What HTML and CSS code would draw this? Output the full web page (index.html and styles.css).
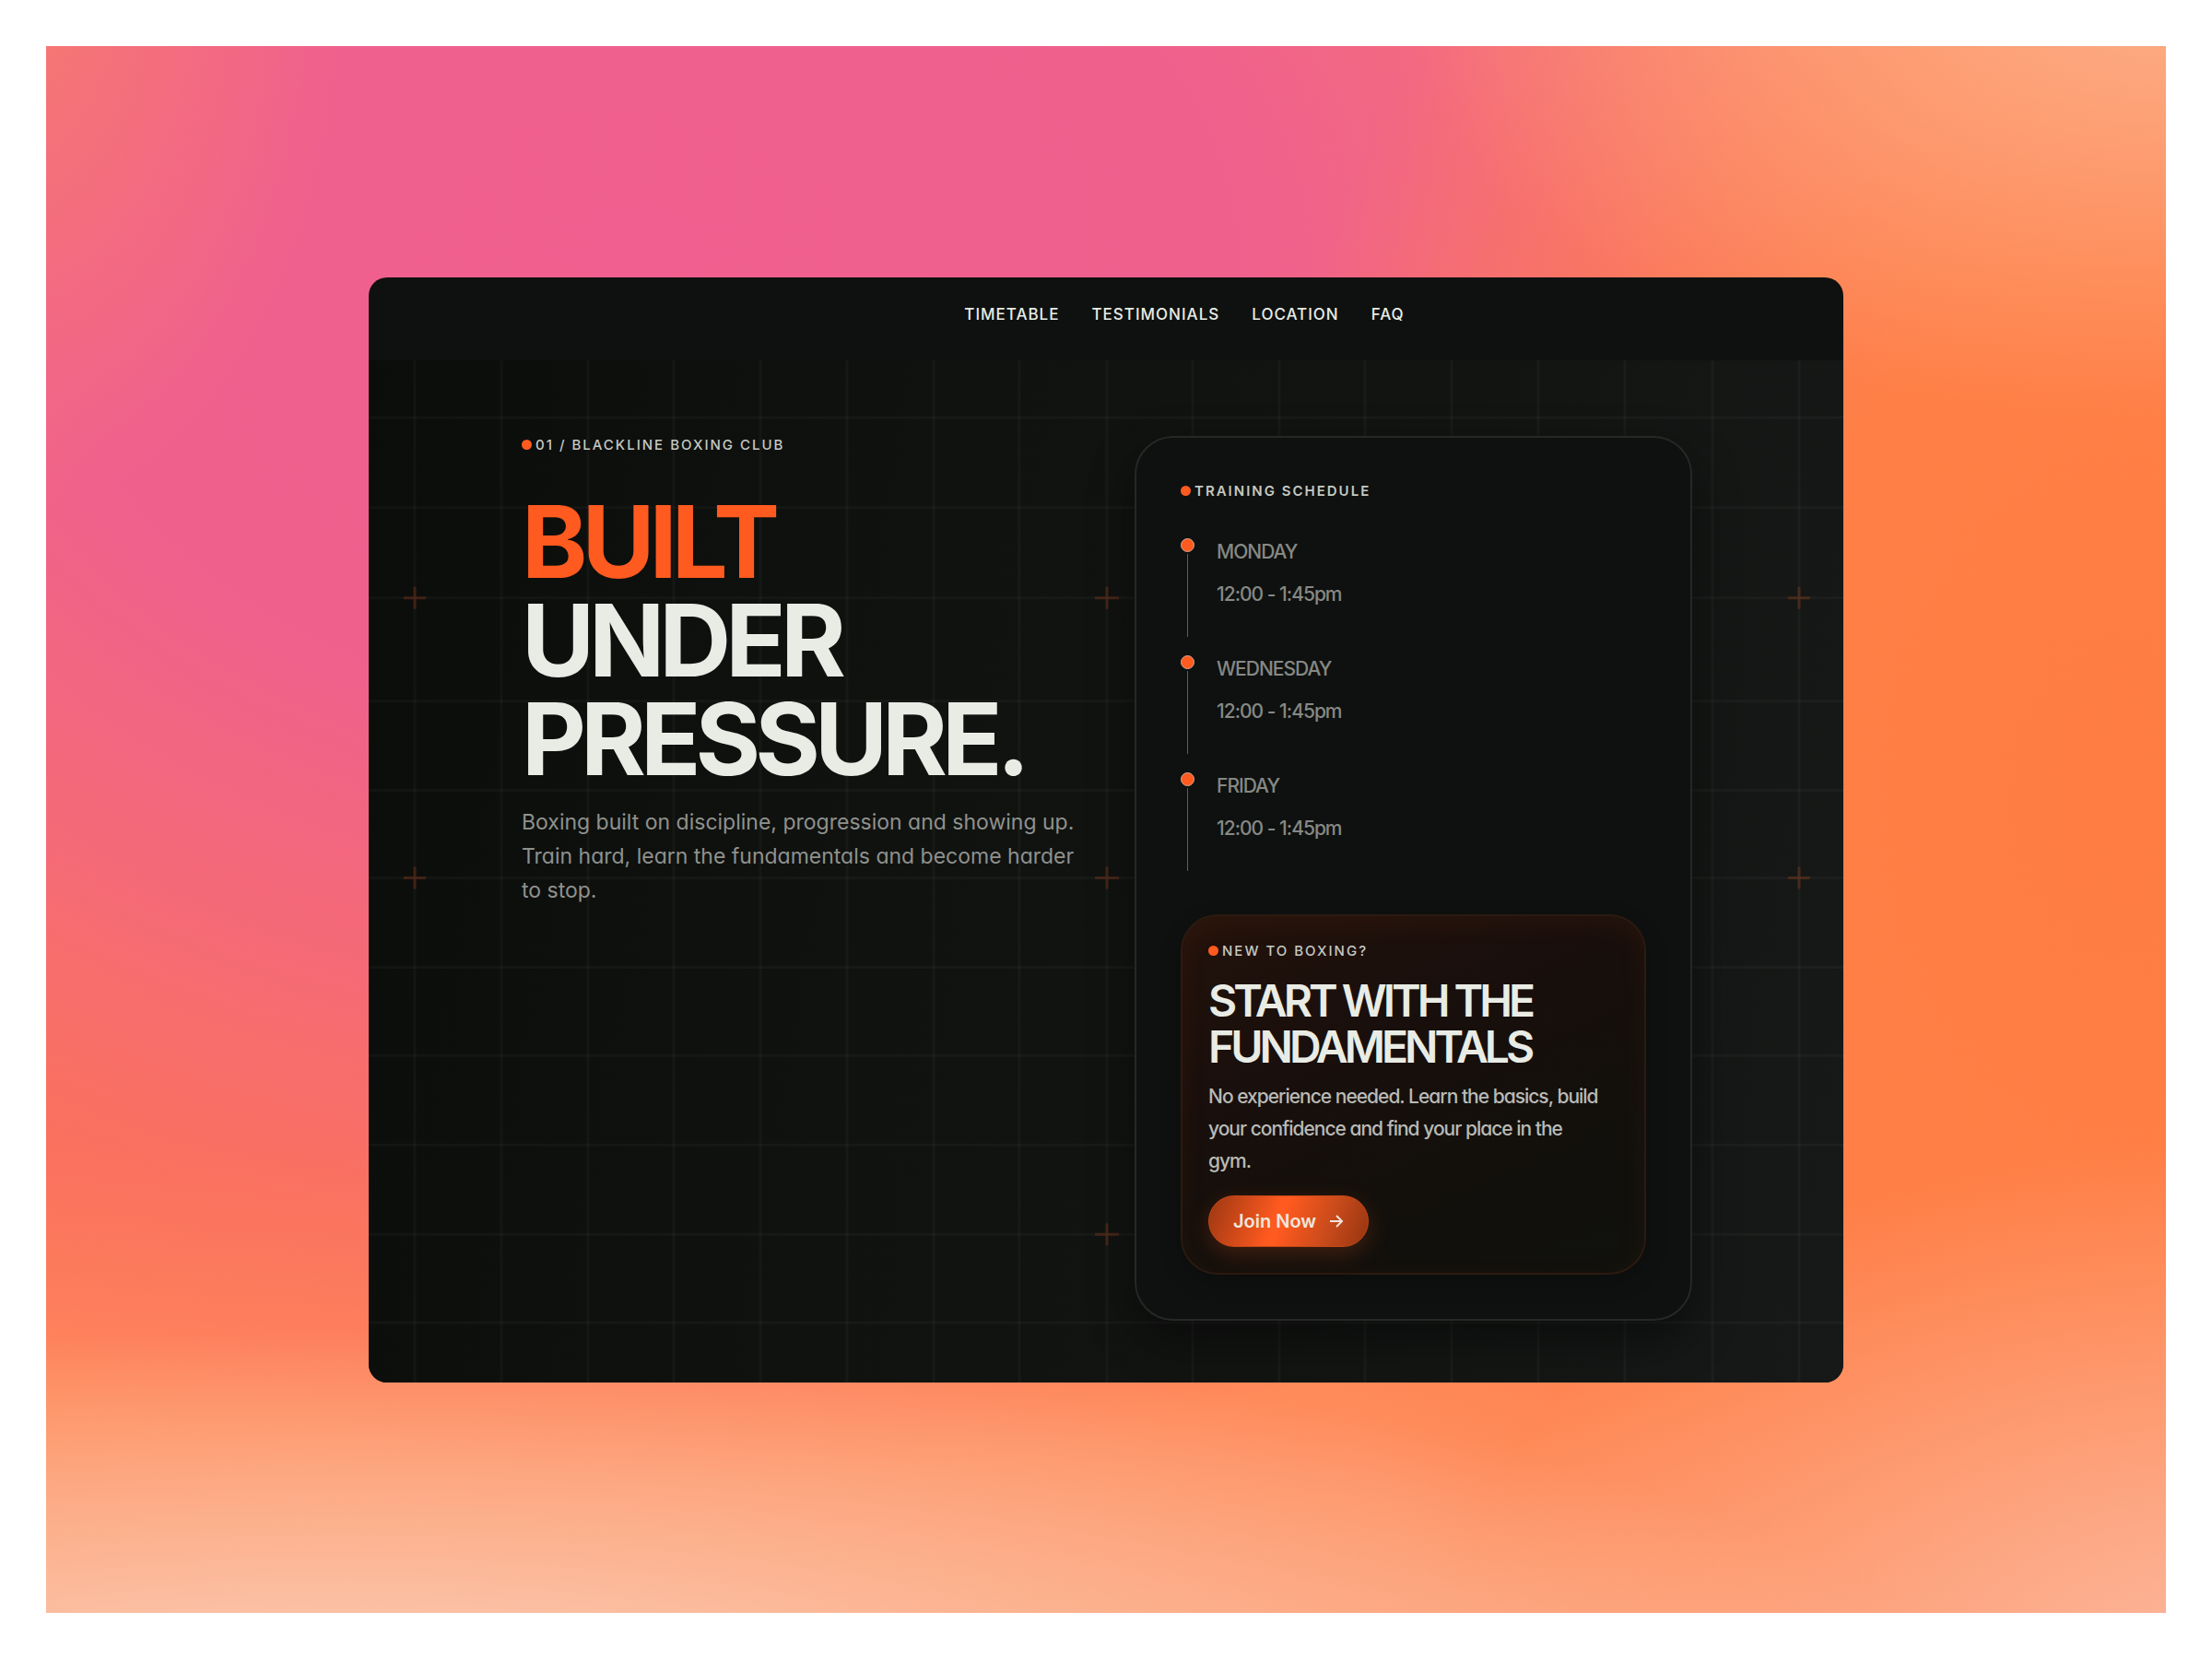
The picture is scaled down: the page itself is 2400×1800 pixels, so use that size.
FILE: index.html
```html
<!DOCTYPE html>
<html lang="en">
<head>
    <meta charset="UTF-8">
    <meta name="viewport" content="width=device-width, initial-scale=1.0">
    <title>Blackline Boxing Club</title>
    <link rel="stylesheet" href="styles.css">
</head>
<body>

    <div class="backdrop">
        <div class="window">
            <nav class="nav">
                <a href="#timetable">Timetable</a>
                <a href="#testimonials">Testimonials</a>
                <a href="#location">Location</a>
                <a href="#faq">FAQ</a>
            </nav>

            <main class="hero">
                <svg class="hero-grid" viewBox="0 0 1600 1110" preserveAspectRatio="none" aria-hidden="true">
                    <path class="grid-line" d="M50 0V1110M144 0V1110M238 0V1110M331 0V1110M425 0V1110M519 0V1110M613 0V1110M706 0V1110M801 0V1110M894 0V1110M988 0V1110M1081 0V1110M1175 0V1110M1269 0V1110M1363 0V1110M1458 0V1110M1552 0V1110"/>
                    <path class="grid-line" d="M0 62H1600M0 160H1600M0 258H1600M0 370H1600M0 467H1600M0 562H1600M0 659H1600M0 755H1600M0 852H1600M0 949H1600M0 1045H1600"/>
                    <path class="grid-cross" d="M38 258H62M50 246V270M788 258H814M801 246V270M1540 258H1564M1552 246V270M38 562H62M50 550V574M788 562H814M801 550V574M1540 562H1564M1552 550V574M788 949H814M801 937V961"/>
                </svg>

                <section class="intro">
                    <p class="label">01 / Blackline Boxing Club</p>
                    <h1><span class="accent">Built</span><br>Under<br>Pressure.</h1>
                    <p class="lead">Boxing built on discipline, progression and showing up. Train hard, learn the fundamentals and become harder to stop.</p>
                </section>

                <section class="card" id="timetable">
                    <p class="label label-bold">Training Schedule</p>
                    <ul class="schedule">
                        <li>
                            <span class="marker"></span>
                            <div class="slot">
                                <p class="day">Monday</p>
                                <p>12:00 - 1:45pm</p>
                            </div>
                        </li>
                        <li>
                            <span class="marker"></span>
                            <div class="slot">
                                <p class="day">Wednesday</p>
                                <p>12:00 - 1:45pm</p>
                            </div>
                        </li>
                        <li>
                            <span class="marker"></span>
                            <div class="slot">
                                <p class="day">Friday</p>
                                <p>12:00 - 1:45pm</p>
                            </div>
                        </li>
                    </ul>

                    <div class="promo">
                        <p class="label">New to boxing?</p>
                        <h2>Start with the fundamentals</h2>
                        <p class="promo-text">No experience needed. Learn the basics, build your confidence and find your place in the gym.</p>
                        <button type="button" class="join">
                            Join Now
                            <svg width="16" height="16" viewBox="0 0 16 16" aria-hidden="true">
                                <path d="M1 8H14M8 2L14 8L8 14"/>
                            </svg>
                        </button>
                    </div>
                </section>
            </main>
        </div>
    </div>

</body>
</html>
```

FILE: styles.css
```css
* {
    box-sizing: border-box;
    margin: 0;
    padding: 0;
}

body {
    min-height: 100vh;
    padding: 50px;
    display: flex;
    background: #fff;
    color: #e9ece5;
    font-family: Inter, "Liberation Sans", sans-serif;
    font-feature-settings: "cv11"; /* single-storey a */
}

.backdrop {
    flex: 1;
    display: flex;
    justify-content: center;
    align-items: center;
    background:
        radial-gradient(ellipse 76% 24% at 14% 106%, #fbcdb8 0%, rgba(251, 195, 165, 0.6) 50%, rgba(251, 190, 160, 0) 100%),
        radial-gradient(ellipse 36% 34% at 102% 104%, #fcb79c 0%, rgba(252, 183, 156, 0) 100%),
        radial-gradient(ellipse 36% 28% at 100% -4%, #fdae88 0%, rgba(253, 174, 136, 0) 100%),
        radial-gradient(ellipse 16% 34% at -2% -4%, #f67a70 0%, rgba(246, 122, 112, 0) 100%),
        radial-gradient(ellipse 42% 80% at 98% 48%, #ff7d43 0%, #ff7f46 40%, rgba(255, 130, 75, 0) 100%),
        radial-gradient(ellipse 78% 78% at 28% 14%, #f05f8f 0%, #f0608d 36%, rgba(243, 102, 126, 0.85) 58%, rgba(249, 110, 100, 0.5) 80%, rgba(252, 116, 92, 0) 100%),
        linear-gradient(#fd9a6c 0%, #ff8450 40%, #fc7459 70%, #ff8a5a 86%, #fd9a70 100%);
}

.window {
    width: 70%;
    max-width: 1600px;
    border-radius: 20px;
    overflow: hidden;
    background: #0e110f;
}

.nav {
    display: flex;
    justify-content: center;
    gap: 35px;
    padding: 30px 0 40px 170px;
}

.nav a {
    color: #e9ece5;
    font-size: 17px;
    line-height: 20px;
    font-weight: 500;
    letter-spacing: 1px;
    text-transform: uppercase;
    text-decoration: none;
}

.hero {
    position: relative;
    display: grid;
    grid-template-columns: 1fr 1fr;
    gap: 60px;
    padding: 82px 164px 67px 166px;
    background: linear-gradient(100deg, #0b0d0b 0%, #101210 35%, #121412 65%, #161917 100%);
}

/* Faint grid behind the hero */
.hero-grid {
    position: absolute;
    inset: 0;
    width: 100%;
    height: 100%;
    fill: none;
}

.grid-line {
    stroke: #fff;
    stroke-opacity: 0.03;
    stroke-width: 3;
}

.grid-cross {
    stroke: #ff5a1f;
    stroke-opacity: 0.2;
    stroke-width: 3;
}

.intro, .card {
    position: relative;
}

.label {
    display: flex;
    align-items: center;
    gap: 4px;
    font-size: 15px;
    line-height: 20px;
    font-weight: 500;
    letter-spacing: 2px;
    text-transform: uppercase;
    color: #c6c9c3;
}

.label::before {
    content: "";
    width: 11px;
    height: 11px;
    border-radius: 50%;
    background: #ff5a1f;
}

.label-bold {
    font-weight: 600;
}

h1 {
    margin: 41px 0 19px;
    font-size: 108px;
    line-height: 107px;
    font-weight: 700;
    letter-spacing: -6px;
    text-transform: uppercase;
}

.accent {
    color: #ff5a1f;
}

.lead {
    font-size: 23px;
    line-height: 37px;
    color: #8f918d;
}

.card {
    padding: 48px;
    border: 2px solid #252825;
    border-radius: 42px;
    background: #0e110f;
    box-shadow: 0 20px 50px rgba(0, 0, 0, 0.45);
}

.schedule {
    list-style: none;
    margin: 33px 0 35px;
}

.schedule li {
    display: flex;
    gap: 24px;
    padding-bottom: 12px;
}

.marker {
    display: flex;
    flex-direction: column;
    align-items: center;
    gap: 2px;
    padding-top: 8px;
}

.marker::before {
    content: "";
    width: 13px;
    height: 13px;
    border: 1px solid #d9a791;
    border-radius: 50%;
    background: #ff5a1f;
}

.marker::after {
    content: "";
    flex: 1;
    width: 1px;
    background: #5c5e5b;
}

.slot {
    padding-bottom: 23px;
    font-size: 21px;
    line-height: 46px;
    font-weight: 500;
    letter-spacing: -1px;
    color: #868884;
}

.day {
    text-transform: uppercase;
}

.promo {
    padding: 28px;
    border: 2px solid #2c1a11;
    border-radius: 40px;
    background: linear-gradient(155deg, #22120b 0%, #190f0c 35%, #13100c 65%, #10110d 100%);
    box-shadow: inset 0 8px 32px rgba(255, 110, 31, 0.06), 0 8px 24px rgba(0, 0, 0, 0.2);
}

h2 {
    margin: 19px 0 11px;
    font-size: 48px;
    line-height: 50px;
    font-weight: 600;
    letter-spacing: -4px;
    text-transform: uppercase;
}

.promo-text {
    margin-bottom: 20px;
    padding-right: 12px;
    font-size: 21px;
    line-height: 35px;
    font-weight: 500;
    letter-spacing: -1px;
    color: #b9bab6;
}

.join {
    display: flex;
    align-items: center;
    gap: 14px;
    padding: 15px 26px;
    border: 1px solid #c44817;
    border-radius: 30px;
    background: linear-gradient(110deg, #9c3712 0%, #ff5a1f 42%, #ff5a1f 46%, #c74a1b 75%, #96340f 100%);
    box-shadow: 0 8px 26px rgba(255, 90, 31, 0.2);
    color: #f0e6dc;
    font: inherit;
    font-size: 20px;
    line-height: 24px;
    font-weight: 600;
    cursor: pointer;
}

.join svg {
    fill: none;
    stroke: currentColor;
    stroke-width: 2;
}
```
